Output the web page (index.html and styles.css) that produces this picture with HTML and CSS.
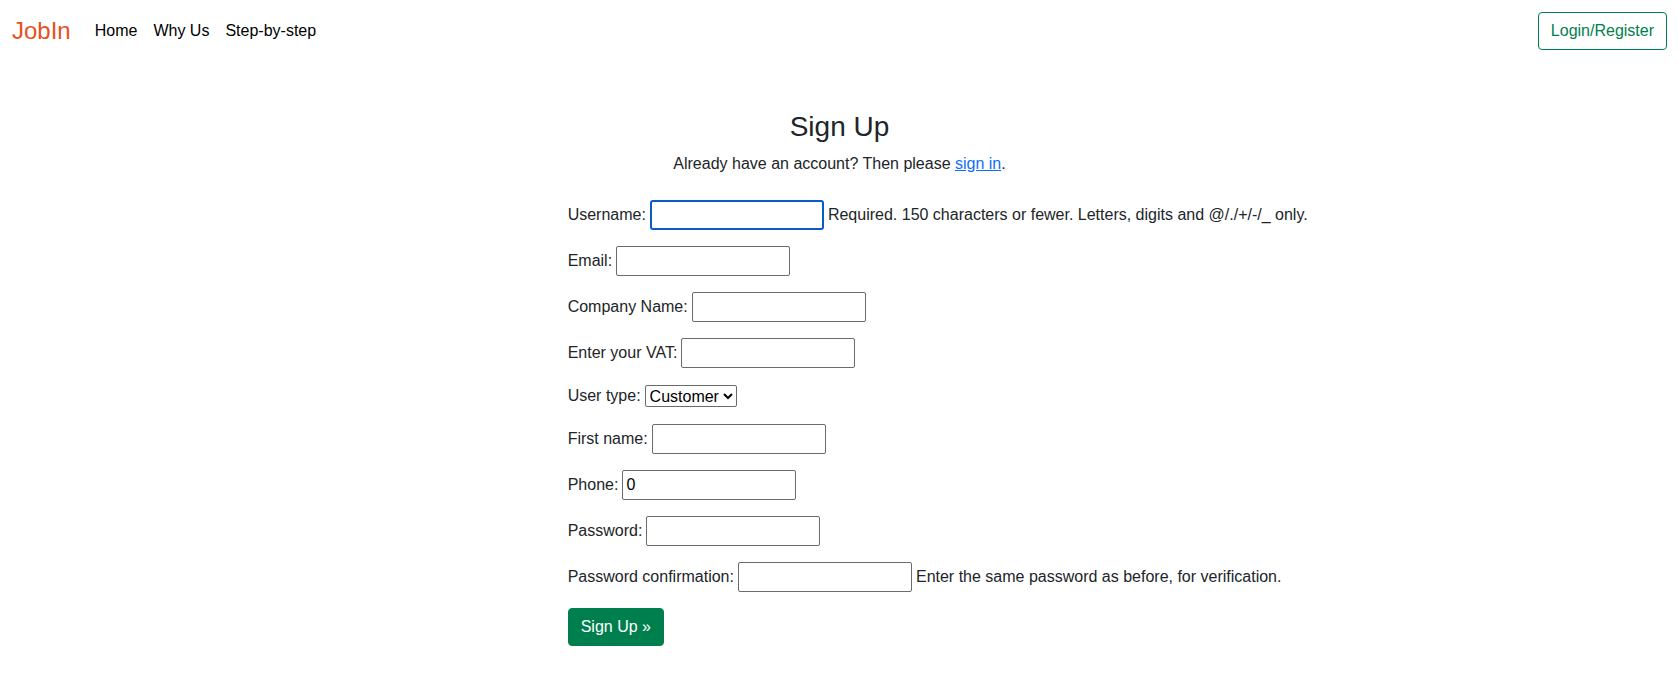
FILE: index.html
```html
<!DOCTYPE html>
<html lang="en">
<head>
<meta charset="utf-8">
<meta name="viewport" content="width=device-width, initial-scale=1">
<title>JobIn - Sign Up</title>
<link rel="stylesheet" href="styles.css">
</head>
<body>
<nav class="navbar">
  <a class="brand" href="#">JobIn</a>
  <a class="nav-link" href="#">Home</a>
  <a class="nav-link" href="#">Why Us</a>
  <a class="nav-link" href="#">Step-by-step</a>
  <a class="btn btn-outline" href="#">Login/Register</a>
</nav>
<main class="signup">
  <header class="intro">
    <h1 class="title">Sign Up</h1>
    <p class="subtitle">Already have an account? Then please <a class="link" href="#">sign in</a>.</p>
  </header>
  <form class="form">
    <p class="row"><label for="username">Username:</label> <input class="field field-active" id="username" type="text"> <span>Required. 150 characters or fewer. Letters, digits and @/./+/-/_ only.</span></p>
    <p class="row"><label for="email">Email:</label> <input class="field" id="email" type="email"></p>
    <p class="row"><label for="company">Company Name:</label> <input class="field" id="company" type="text"></p>
    <p class="row"><label for="vat">Enter your VAT:</label> <input class="field" id="vat" type="text"></p>
    <p class="row"><label for="usertype">User type:</label> <select class="select" id="usertype"><option>Customer</option></select></p>
    <p class="row"><label for="firstname">First name:</label> <input class="field" id="firstname" type="text"></p>
    <p class="row"><label for="phone">Phone:</label> <input class="field" id="phone" type="text" value="0"></p>
    <p class="row"><label for="password">Password:</label> <input class="field" id="password" type="password"></p>
    <p class="row"><label for="confirm">Password confirmation:</label> <input class="field" id="confirm" type="password"> <span>Enter the same password as before, for verification.</span></p>
    <button class="btn btn-solid" type="submit">Sign Up »</button>
  </form>
</main>
</body>
</html>
```

FILE: styles.css
```css
*, *::before, *::after { box-sizing: border-box; }
body {
  margin: 0;
  background: #fff;
  color: #212529;
  font: 16px/24px "Liberation Sans", Arial, sans-serif;
}
.navbar {
  display: flex;
  align-items: center;
  padding: 12px;
}
.brand {
  margin-right: 16px;
  color: #e8501c;
  font-size: 24px;
  line-height: 36px;
  text-decoration: none;
}
.nav-link {
  padding: 0 8px;
  color: #000;
  text-decoration: none;
}
.btn {
  display: inline-block;
  padding: 6px 12px;
  border: 1px solid #007f4e;
  border-radius: 4px;
  font: inherit;
  text-decoration: none;
  cursor: pointer;
}
.btn-outline {
  margin-left: auto;
  color: #007f4e;
}
.btn-solid {
  background: #007f4e;
  color: #fff;
}
.signup { padding-top: 48px; }
.intro {
  margin-bottom: 24px;
  text-align: center;
}
.title {
  margin: 0 0 8px;
  font-size: 28px;
  font-weight: 400;
  line-height: 34px;
}
.subtitle { margin: 0; }
.link { color: #0d6efd; }
.form {
  margin-left: calc(100% / 3);
  padding-left: 8px;
}
.row {
  display: flex;
  align-items: center;
  gap: 4px;
  margin: 0 0 16px;
  white-space: nowrap;
}
.field {
  width: 174px;
  height: 30px;
  padding: 1px 3px;
  border: 1px solid #6b6b6b;
  border-radius: 2px;
  background: #fff;
  color: #000;
  font: inherit;
}
.field-active {
  padding: 0 2px;
  border: 2px solid #0a5bc4;
  border-radius: 3px;
}
.field:focus { outline: none; }
.select {
  height: 22px;
  margin: 1px 0;
  padding: 0;
  border: 1px solid #6b6b6b;
  border-radius: 2px;
  background: #fff;
  color: #000;
  font: inherit;
  line-height: 20px;
}
```
